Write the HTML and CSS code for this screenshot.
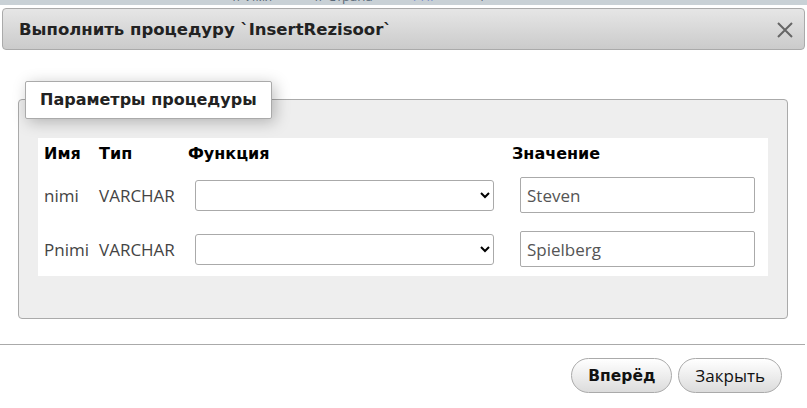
FILE: index.html
```html
<!DOCTYPE html>
<html lang="ru">
<head>
    <meta charset="UTF-8">
    <meta name="viewport" content="width=device-width, initial-scale=1.0">
    <title>Выполнить процедуру</title>
    <link rel="stylesheet" href="styles.css">
</head>
<body>
    <!-- Page behind the dialog -->
    <div class="page-strip">
        <span class="strip-text">1/ Имя</span>
        <span class="strip-text">1/ Страна</span>
        <span class="strip-text link">PHP</span>
        <span class="strip-text">1</span>
    </div>

    <div class="dialog">
        <div class="titlebar">
            <span class="title">Выполнить процедуру `InsertRezisoor`</span>
            <button class="close-btn" title="Закрыть">
                <svg width="16" height="16" viewBox="0 0 16 16">
                    <path d="M1 1 L15 15 M15 1 L1 15" stroke="#666" stroke-width="2" fill="none"/>
                </svg>
            </button>
        </div>

        <div class="dialog-body">
            <div class="fieldset">
                <div class="legend">Параметры процедуры</div>

                <div class="params">
                    <div class="head">Имя</div>
                    <div class="head">Тип</div>
                    <div class="head">Функция</div>
                    <div class="head">Значение</div>

                    <div class="cell">nimi</div>
                    <div class="cell">VARCHAR</div>
                    <div class="cell"><select class="func"><option></option></select></div>
                    <div class="cell"><input type="text" class="value" value="Steven"></div>

                    <div class="cell">Pnimi</div>
                    <div class="cell">VARCHAR</div>
                    <div class="cell"><select class="func"><option></option></select></div>
                    <div class="cell"><input type="text" class="value" value="Spielberg"></div>
                </div>
            </div>
        </div>

        <div class="buttonpane">
            <button class="btn btn-primary">Вперёд</button>
            <button class="btn">Закрыть</button>
        </div>
    </div>
</body>
</html>
```

FILE: styles.css
```css
* {
    margin: 0;
    padding: 0;
    box-sizing: border-box;
}

body {
    font-family: "Open Sans", Arial, sans-serif;
    background: #fff;
    color: #444;
    width: 807px;
    height: 408px;
    overflow: hidden;
}

/* Strip of the page left visible above the dialog */
.page-strip {
    height: 5px;
    background: #c9d1d6;
    overflow: hidden;
    display: flex;
    gap: 40px;
    padding-left: 230px;
}

.strip-text {
    font-size: 13px;
    line-height: 13px;
    margin-top: -10px;
    color: #5a6a78;
}

.strip-text.link {
    color: #7b8fc9;
}

/* Title bar */
.titlebar {
    margin: 3px 2px 0 2px;
    height: 42px;
    border: 1px solid #aaa;
    border-radius: 4px;
    background: linear-gradient(#e6e6e6, #cbcbcb);
    display: flex;
    align-items: center;
    justify-content: space-between;
    padding: 0 10px 0 16px;
}

.title {
    font-family: "DejaVu Sans", Verdana, sans-serif;
    font-weight: bold;
    font-size: 16.5px;
    color: #222;
}

.close-btn {
    border: none;
    background: transparent;
    width: 18px;
    height: 18px;
    display: flex;
    align-items: center;
    justify-content: center;
    margin-top: 2px;
}

/* Fieldset */
.dialog-body {
    padding: 49px 19px 0 18px;
}

.fieldset {
    background: #eee;
    border: 1px solid #aaa;
    border-radius: 4px;
    padding: 0 19px 41px 19px;
    height: 220px;
}

.legend {
    width: fit-content;
    margin: -19px 0 0 -13px;
    height: 38px;
    padding: 0 14px;
    line-height: 36px;
    background: #fff;
    border: 1px solid #aaa;
    border-radius: 2px;
    box-shadow: 3px 3px 15px rgba(0, 0, 0, 0.25);
    font-family: "DejaVu Sans", Verdana, sans-serif;
    font-weight: bold;
    font-size: 16px;
    color: #222;
}

.params {
    margin-top: 19px;
    background: #fff;
    display: grid;
    grid-template-columns: 55px 89px 324px 1fr;
    grid-template-rows: 30px 54px 54px;
    align-items: center;
}

.head {
    padding-left: 6px;
    font-family: "DejaVu Sans", Verdana, sans-serif;
    font-weight: bold;
    font-size: 16px;
    color: #000;
    padding-top: 1px;
}

.cell {
    padding-left: 6px;
    font-size: 17px;
    color: #444;
}

.func {
    margin-left: 7px;
    width: 299px;
    height: 31px;
    border: 1px solid #aaa;
    border-radius: 3px;
    background: #fff;
    display: block;
}

.value {
    margin-left: 8px;
    width: 235px;
    height: 36px;
    border: 1px solid #aaa;
    border-radius: 2px;
    padding: 0 6px;
    font-family: "Open Sans", Arial, sans-serif;
    font-size: 17px;
    color: #555;
    display: block;
}

/* Buttons */
.buttonpane {
    margin: 25px 2px 0 0;
    border-top: 1px solid #aaa;
    padding: 13px 23px 0 0;
    display: flex;
    justify-content: flex-end;
    gap: 6px;
}

.btn {
    height: 35px;
    border: 1px solid #aaa;
    border-radius: 18px;
    background: linear-gradient(#fff, #dcdcdc);
    font-family: "Open Sans", Arial, sans-serif;
    font-size: 17px;
    color: #111;
    padding: 0 16px;
    cursor: pointer;
}

.btn-primary {
    font-family: "DejaVu Sans", Verdana, sans-serif;
    font-weight: bold;
    font-size: 15.5px;
    width: 101px;
    padding: 0;
}
```
